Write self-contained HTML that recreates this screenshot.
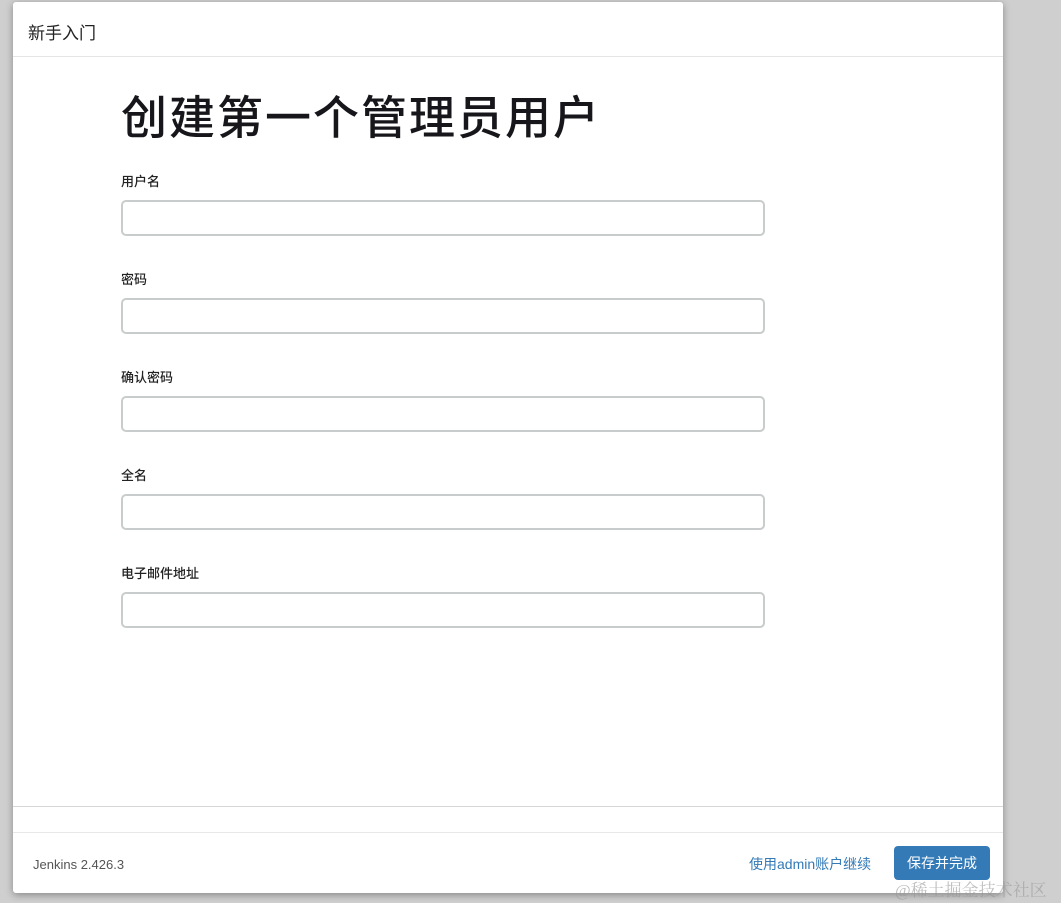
<!DOCTYPE html>
<html><head><meta charset="utf-8"><style>
*{box-sizing:border-box;margin:0;padding:0}
body{width:1061px;height:903px;background:#cfcfcf;font-family:"Liberation Sans","Noto Sans CJK SC",sans-serif;position:relative;overflow:hidden}
.panel{position:absolute;left:13px;top:2px;width:990px;height:891px;background:#fff;border-radius:3px;box-shadow:0 2px 8px rgba(0,0,0,.35)}
.hdr{position:absolute;left:0;top:0;width:100%;height:55px;border-bottom:1px solid #e5e5e5}
.hdr span{position:absolute;left:15px;top:17px;font-size:17px;color:#222}
h1{position:absolute;left:108px;top:86px;font-size:46px;font-weight:500;color:#16161b;letter-spacing:2px;line-height:60px}
.lbl{position:absolute;left:108px;font-size:13px;font-weight:500;color:#222}
.inp{position:absolute;left:108px;width:644px;height:36px;border:2px solid #c9cccc;border-radius:5px}
.l1{position:absolute;left:0;width:100%;border-top:1px solid #d6d6d6}
.ver{position:absolute;left:20px;top:855px;font-size:13px;color:#555}
.link{position:absolute;left:736px;top:852px;font-size:14px;color:#337ab7}
.btn{position:absolute;left:881px;top:844px;width:96px;height:34px;background:#337ab7;border-radius:4px;color:#fff;font-size:14px;text-align:center;line-height:34px}
.wm{position:absolute;left:895px;top:876px;font-size:17px;color:rgba(150,150,150,.6);font-family:"Liberation Serif","Noto Serif CJK SC",serif}
</style></head><body>
<div class="panel">
<div class="hdr"><span>新手入门</span></div>
<h1>创建第一个管理员用户</h1>
<div class="lbl" style="top:169px">用户名</div><div class="inp" style="top:198px"></div>
<div class="lbl" style="top:267px">密码</div><div class="inp" style="top:296px"></div>
<div class="lbl" style="top:365px">确认密码</div><div class="inp" style="top:394px"></div>
<div class="lbl" style="top:463px">全名</div><div class="inp" style="top:492px"></div>
<div class="lbl" style="top:561px">电子邮件地址</div><div class="inp" style="top:590px"></div>
<div class="l1" style="top:804px"></div>
<div class="l1" style="top:830px;border-color:#e8e8e8"></div>
<div class="ver">Jenkins 2.426.3</div>
<div class="link">使用admin账户继续</div>
<div class="btn">保存并完成</div>
</div>
<div class="wm">@稀土掘金技术社区</div>
</body></html>
